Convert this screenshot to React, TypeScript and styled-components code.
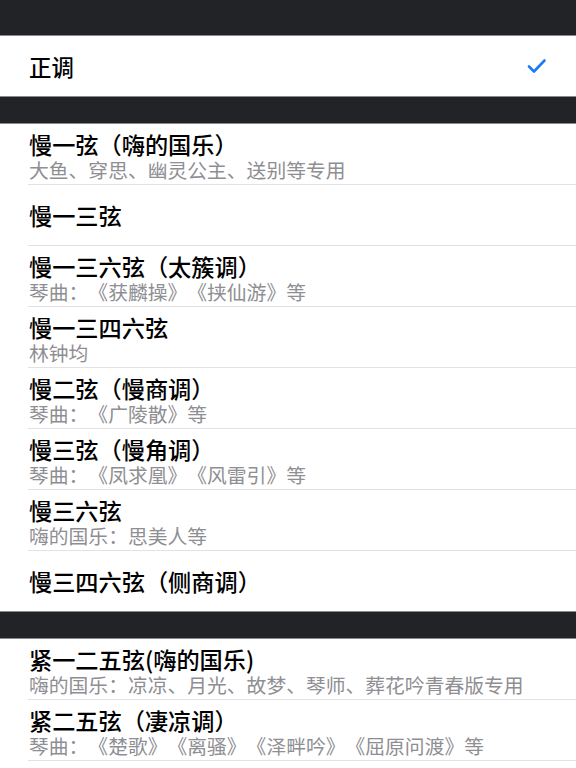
import React from 'react'
import styled, { createGlobalStyle } from 'styled-components'

const GlobalStyle = createGlobalStyle`
  html, body {
    margin: 0;
    padding: 0;
    background: #ffffff;
  }
  body {
    font-family: "Noto Sans CJK SC", "Noto Sans", sans-serif;
    -webkit-font-smoothing: antialiased;
    text-spacing-trim: space-all;
  }
`

type Tuning = { title: string; subtitle?: string }

const groupOne: Tuning[] = [
  { title: '慢一弦（嗨的国乐）', subtitle: '大鱼、穿思、幽灵公主、送别等专用' },
  { title: '慢一三弦' },
  { title: '慢一三六弦（太簇调）', subtitle: '琴曲：《获麟操》《挟仙游》等' },
  { title: '慢一三四六弦', subtitle: '林钟均' },
  { title: '慢二弦（慢商调）', subtitle: '琴曲：《广陵散》等' },
  { title: '慢三弦（慢角调）', subtitle: '琴曲：《凤求凰》《风雷引》等' },
  { title: '慢三六弦', subtitle: '嗨的国乐：思美人等' },
  { title: '慢三四六弦（侧商调）' },
]

const groupTwo: Tuning[] = [
  { title: '紧一二五弦(嗨的国乐)', subtitle: '嗨的国乐：凉凉、月光、故梦、琴师、葬花吟青春版专用' },
  { title: '紧二五弦（凄凉调）', subtitle: '琴曲：《楚歌》《离骚》《泽畔吟》《屈原问渡》等' },
]

const Page = styled.div`
  width: 576px;
  height: 768px;
  overflow: hidden;
  background: #ffffff;
`

const TopBar = styled.div`
  height: 35px;
  background: #222327;
  border-bottom: 1px solid #8a8a8e;
`

const SectionGap = styled.div`
  height: 26px;
  background: #222327;
  border-top: 1px solid #8a8a8e;
  border-bottom: 1px solid #8a8a8e;
`

const Group = styled.div`
  display: flex;
  flex-direction: column;
  background: #ffffff;
`

const DefaultRow = styled.div`
  height: 60px;
  display: flex;
  align-items: center;
  justify-content: space-between;
  padding: 0 29px;
`

const Item = styled.div<{ $single?: boolean; $last?: boolean }>`
  height: 60px;
  margin-left: 28px;
  padding-left: 1px;
  display: flex;
  flex-direction: column;
  justify-content: ${(p) => (p.$single ? 'center' : 'flex-start')};
  border-bottom: ${(p) => (p.$last ? 'none' : '1px solid #e2e2e4')};
`

const Title = styled.div<{ $single?: boolean; $size?: number }>`
  font-size: ${(p) => p.$size ?? 23.2}px;
  font-weight: 500;
  line-height: 26px;
  color: #000000;
  white-space: nowrap;
  padding-top: ${(p) => (p.$single ? '0' : '7px')};
`

const Subtitle = styled.div`
  margin-top: 2px;
  font-size: 19.8px;
  line-height: 22px;
  color: #8e8e93;
  white-space: nowrap;
`

const Check = () => (
  <svg width="20" height="16" viewBox="0 0 20 16" fill="none">
    <path d="M2 8.5 L7 13.5 L17.5 2.5" stroke="#1a7cf6" strokeWidth="2.6" strokeLinecap="round" strokeLinejoin="round" />
  </svg>
)

const TuningList: React.FC<{ items: Tuning[]; lastBorder?: boolean }> = ({ items, lastBorder }) => (
  <Group>
    {items.map((t, i) => (
      <Item key={t.title} $single={!t.subtitle} $last={i === items.length - 1 && !lastBorder}>
        <Title $single={!t.subtitle}>{t.title}</Title>
        {t.subtitle && <Subtitle>{t.subtitle}</Subtitle>}
      </Item>
    ))}
  </Group>
)

const App: React.FC = () => (
  <Page>
    <GlobalStyle />
    <TopBar />
    <DefaultRow>
      <Title $single $size={22.4}>正调</Title>
      <Check />
    </DefaultRow>
    <SectionGap />
    <TuningList items={groupOne} />
    <SectionGap />
    <TuningList items={groupTwo} lastBorder />
  </Page>
)

export default App
